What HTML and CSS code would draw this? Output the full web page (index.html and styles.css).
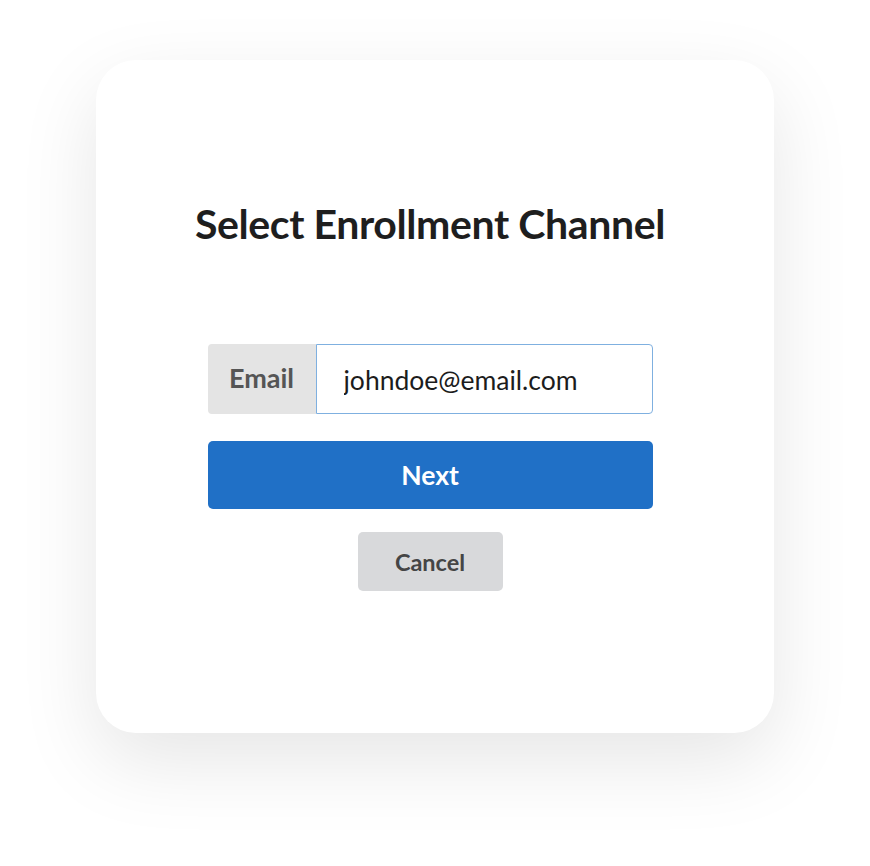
FILE: index.html
```html
<!DOCTYPE html>
<html lang="en">
  <head>
    <meta charset="UTF-8" />
    <meta name="viewport" content="width=device-width, initial-scale=1.0" />
    <title>Select Enrollment Channel</title>
    <link rel="stylesheet" href="styles.css">
  </head>
  <body>
    <div class="card">
      <h1>Select Enrollment Channel</h1>

      <form class="enroll-form">
        <div class="input-group">
          <label class="input-label" for="email">Email</label>
          <input class="input-field" id="email" type="email" value="johndoe@email.com" />
        </div>
        <button type="submit" class="btn-next">Next</button>
        <button type="button" class="btn-cancel">Cancel</button>
      </form>
    </div>
  </body>
</html>
```

FILE: styles.css
```css
body {
  font-family: Lato, "Noto Sans", sans-serif;
  margin: 0;
  padding: 60px 0 0 96px;
  min-height: 866px;
  box-sizing: border-box;
  background-color: #fff;
}

.card {
  box-sizing: border-box;
  width: 678px;
  height: 673px;
  padding: 136px 0 0 0;
  background-color: #fff;
  border-radius: 40px;
  box-shadow: 0 28px 80px rgba(0, 0, 0, 0.1);
  display: flex;
  flex-direction: column;
  align-items: center;
}

h1 {
  margin: 0 10px 0 0;
  font-size: 41px;
  font-weight: 700;
  line-height: 56px;
  color: #1e1e1e;
  letter-spacing: -0.4px;
}

.enroll-form {
  margin: 92px 10px 0 0;
  width: 445px;
  display: flex;
  flex-direction: column;
  align-items: center;
}

.input-group {
  display: flex;
  width: 100%;
  height: 70px;
}

.input-label {
  width: 108px;
  display: flex;
  align-items: center;
  justify-content: center;
  padding-bottom: 4px;
  box-sizing: border-box;
  background-color: #e4e4e4;
  border-radius: 4px 0 0 4px;
  color: #555;
  font-size: 27px;
  font-weight: 700;
}

.input-field {
  flex: 1;
  min-width: 0;
  box-sizing: border-box;
  height: 70px;
  padding: 2px 0 0 27px;
  border: 1px solid #7fb0e0;
  border-radius: 0 4px 4px 0;
  font-family: Lato, "Noto Sans", sans-serif;
  font-size: 26.5px;
  color: #1c1c1c;
  outline: none;
}

.btn-next {
  margin-top: 27px;
  width: 100%;
  height: 68px;
  border: none;
  border-radius: 5px;
  background-color: #2070c6;
  color: #fff;
  font-family: Lato, "Noto Sans", sans-serif;
  font-size: 26.5px;
  font-weight: 700;
}

.btn-cancel {
  margin-top: 23px;
  width: 145px;
  height: 59px;
  border: none;
  border-radius: 5px;
  background-color: #d8d9db;
  color: #454545;
  font-family: Lato, "Noto Sans", sans-serif;
  font-size: 23.5px;
  font-weight: 700;
}
```
